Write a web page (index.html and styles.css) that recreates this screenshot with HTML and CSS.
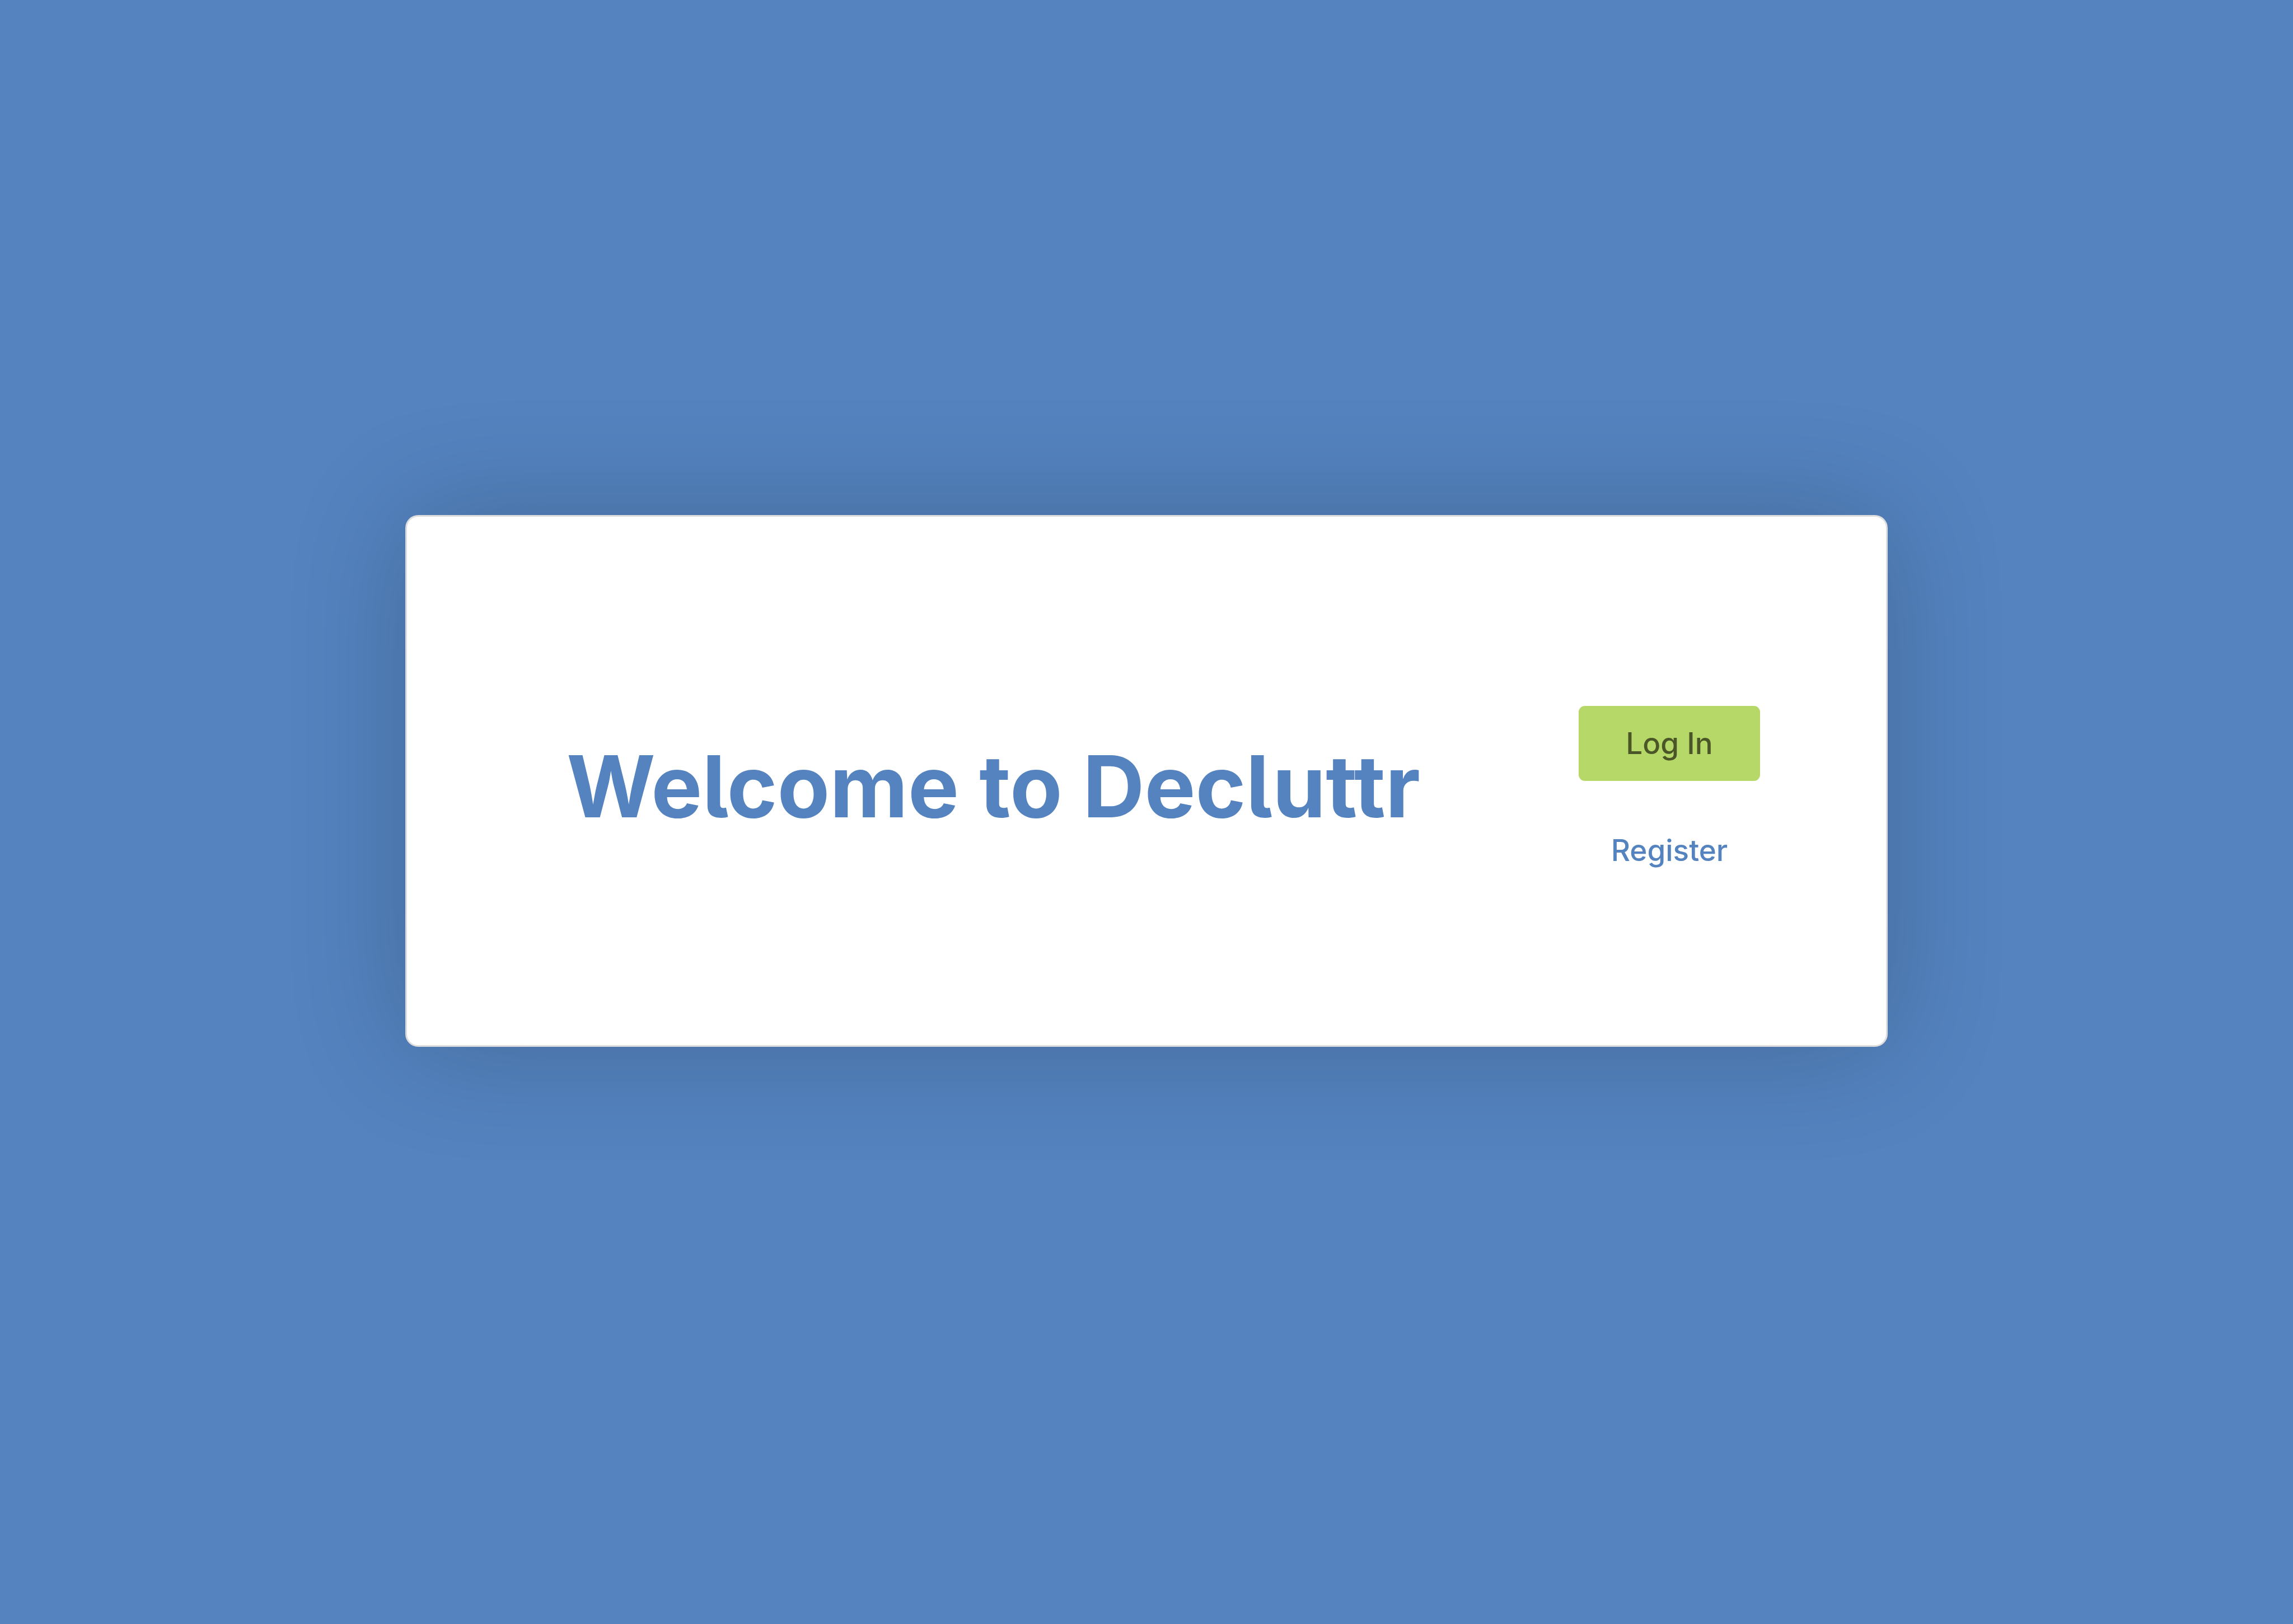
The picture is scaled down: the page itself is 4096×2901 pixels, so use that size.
FILE: index.html
```html
<!DOCTYPE html>
<html lang="en">
<head>
<meta charset="utf-8">
<meta name="viewport" content="width=device-width, initial-scale=1">
<title>Decluttr</title>
<link rel="stylesheet" href="styles.css">
</head>
<body>
<main class="page">
  <section class="card">
    <h1 class="card-title">Welcome to Decluttr</h1>
    <div class="card-actions">
      <button class="btn btn-primary" type="button">Log In</button>
      <a class="btn btn-link" href="#register">Register</a>
    </div>
  </section>
</main>
</body>
</html>
```
FILE: styles.css
```css
* {
  box-sizing: border-box;
}

body {
  margin: 0;
  background: #5483bf;
  color: #5483bf;
  font-family: Inter, "Liberation Sans", sans-serif;
  font-feature-settings: "cv05";
}

.page {
  display: flex;
  align-items: center;
  justify-content: center;
  min-height: 100vh;
  padding-bottom: 112px;
}

.card {
  display: flex;
  align-items: center;
  justify-content: space-between;
  width: 100%;
  max-width: 2648px;
  padding: 338px 225px 281px 285px;
  border: 3px solid #dddddd;
  border-radius: 23px;
  background: #ffffff;
  box-shadow: 0 0 212px rgba(0, 0, 0, 0.2);
}

.card-title {
  margin: 0 0 36px;
  font-size: 153px;
  font-weight: 700;
  line-height: 180px;
  white-space: nowrap;
}

.card-actions {
  display: flex;
  flex-direction: column;
  gap: 57px;
}

.btn {
  width: 324px;
  height: 134px;
  padding: 0;
  border: 0;
  border-radius: 11px;
  font: inherit;
  font-size: 53px;
  font-weight: 500;
  line-height: 134px;
  text-align: center;
  text-decoration: none;
  cursor: pointer;
}

.btn-primary {
  background: #b5d869;
  color: #4a5627;
}

.btn-link {
  background: transparent;
  color: #5483bf;
}
```
